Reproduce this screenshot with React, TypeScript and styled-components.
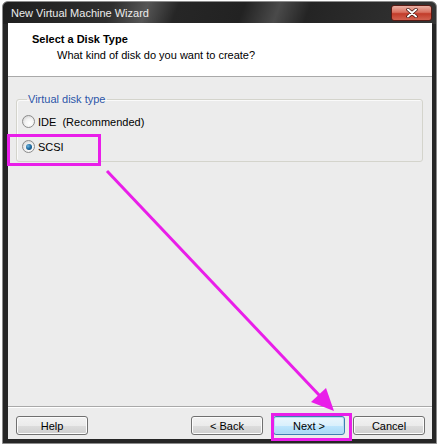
import styled, { createGlobalStyle } from "styled-components";

const GlobalStyle = createGlobalStyle`
  html, body {
    margin: 0;
    padding: 0;
    background: #ffffff;
  }
  body {
    font-family: "Liberation Sans", Arial, sans-serif;
    font-size: 11px;
    color: #000;
  }
`;

const Page = styled.div`
  position: relative;
  width: 438px;
  height: 446px;
  overflow: hidden;
`;

const Frame = styled.div`
  margin: 1px 0 0 2px;
  width: 435px;
  height: 443px;
  box-sizing: border-box;
  display: flex;
  flex-direction: column;
  padding: 0 4px 4px 5px;
  border-radius: 6px 6px 0 0;
  border: 1px solid #8c8c8c;
  background: linear-gradient(
    110deg,
    #1e1e1e 0%,
    #2e2e2e 25%,
    #555555 33%,
    #262626 40%,
    #222222 55%,
    #4a4a4a 63%,
    #242424 70%,
    #343434 100%
  );
  background-size: 100% 22px;
  background-repeat: no-repeat;
  background-color: #262626;
`;

const TitleBar = styled.div`
  height: 21px;
  flex: none;
  display: flex;
  align-items: center;
  justify-content: space-between;
  padding-left: 3px;
  color: #ececec;
  font-size: 11px;
`;

const CloseButton = styled.div`
  width: 39px;
  height: 14px;
  margin-top: 1px;
  border: 1px solid #5a1a14;
  border-radius: 3px;
  background: linear-gradient(#eab0a4 0%, #d9705f 45%, #c23c2a 55%, #d2614f 100%);
  display: flex;
  align-items: center;
  justify-content: center;
`;

const Client = styled.div`
  flex: 1;
  display: flex;
  flex-direction: column;
  background: #ececec;
`;

const Header = styled.div`
  height: 54px;
  flex: none;
  box-sizing: border-box;
  background: #ffffff;
  padding: 9px 0 0 24px;
  border-bottom: 1px solid #a9a9a9;
`;

const HeaderTitle = styled.div`
  font-weight: bold;
  line-height: 14px;
`;

const HeaderSub = styled.div`
  margin: 2px 0 0 25px;
  line-height: 14px;
`;

const Body = styled.div`
  flex: 1;
  padding: 16px 9px 0 8px;
`;

const Group = styled.fieldset`
  margin: 0;
  padding: 3px 0 2px 5px;
  border: 1px solid #d4d4cc;
  border-radius: 3px;
  box-shadow: inset 1px 1px 0 #fafafa;
`;

const Legend = styled.legend`
  margin-left: 5px;
  padding: 0 2px 0 1px;
  line-height: 13px;
  color: #2c56a8;
`;

const Option = styled.label`
  height: 25px;
  display: flex;
  align-items: center;
  gap: 3px;
  white-space: pre;
`;

const RadioDot = styled.span<{ $checked?: boolean }>`
  width: 11px;
  height: 11px;
  border-radius: 50%;
  border: 1px solid #8b8b8b;
  background: radial-gradient(circle at 60% 65%, #ffffff 0%, #f2f2f2 45%, #c8c8c8 100%);
  display: flex;
  align-items: center;
  justify-content: center;
  &::after {
    content: "";
    display: ${(p) => (p.$checked ? "block" : "none")};
    width: 6px;
    height: 6px;
    border-radius: 50%;
    background: radial-gradient(circle at 35% 35%, #6fb6e0 0%, #1f6aa0 50%, #0d3c63 100%);
  }
`;

const Footer = styled.div`
  height: 33px;
  flex: none;
  box-sizing: border-box;
  border-top: 1px solid #a9a9a9;
  box-shadow: inset 0 1px 0 #ffffff;
  display: flex;
  align-items: flex-start;
  padding: 9px 7px 0 8px;
`;

const Button = styled.div<{ $default?: boolean }>`
  width: 72px;
  height: 19px;
  box-sizing: border-box;
  border: 1px solid ${(p) => (p.$default ? "#3c7fb1" : "#707070")};
  border-radius: 3px;
  background: ${(p) =>
    p.$default
      ? "linear-gradient(#eaf6fd 0%, #d9f0fc 50%, #bee6fd 51%, #a7d9f5 100%)"
      : "linear-gradient(#f2f2f2 0%, #ebebeb 50%, #dddddd 51%, #cfcfcf 100%)"};
  box-shadow: inset 0 0 0 1px ${(p) => (p.$default ? "#b8dcf3" : "#fcfcfc")};
  display: flex;
  align-items: center;
  justify-content: center;
  font-size: 11px;
`;

const Spacer = styled.div`
  flex: 1;
`;

const ButtonGap = styled.div<{ $w: number }>`
  width: ${(p) => p.$w}px;
`;

const Overlay = styled.svg`
  position: absolute;
  left: 0;
  top: 0;
  pointer-events: none;
`;

function App() {
  return (
    <Page>
      <GlobalStyle />
      <Frame>
        <TitleBar>
          <span>New Virtual Machine Wizard</span>
          <CloseButton>
            <svg width="14" height="10" viewBox="0 0 14 10">
              <path d="M3 1.5 L11 8.5 M11 1.5 L3 8.5" stroke="#3a0f0a" strokeWidth="3.4" strokeLinecap="round" />
              <path d="M3 1.5 L11 8.5 M11 1.5 L3 8.5" stroke="#ffffff" strokeWidth="2" strokeLinecap="round" />
            </svg>
          </CloseButton>
        </TitleBar>
        <Client>
          <Header>
            <HeaderTitle>Select a Disk Type</HeaderTitle>
            <HeaderSub>What kind of disk do you want to create?</HeaderSub>
          </Header>
          <Body>
            <Group>
              <Legend>Virtual disk type</Legend>
              <Option>
                <RadioDot />
                <span>IDE  (Recommended)</span>
              </Option>
              <Option>
                <RadioDot $checked />
                <span>SCSI</span>
              </Option>
            </Group>
          </Body>
          <Footer>
            <Button>Help</Button>
            <Spacer />
            <Button>&lt; Back</Button>
            <ButtonGap $w={10} />
            <Button $default>Next &gt;</Button>
            <ButtonGap $w={8} />
            <Button>Cancel</Button>
          </Footer>
        </Client>
      </Frame>
      <Overlay width="438" height="446" viewBox="0 0 438 446">
        <rect x="8.5" y="135.5" width="91" height="29" fill="none" stroke="#e91ee9" strokeWidth="3" />
        <rect x="272.5" y="414.5" width="78" height="25" fill="none" stroke="#e91ee9" strokeWidth="3" />
        <line x1="107" y1="171" x2="320" y2="396" stroke="#e91ee9" strokeWidth="3" />
        <polygon points="334,411 326,388 311,402" fill="#e91ee9" />
      </Overlay>
    </Page>
  );
}

export default App;
